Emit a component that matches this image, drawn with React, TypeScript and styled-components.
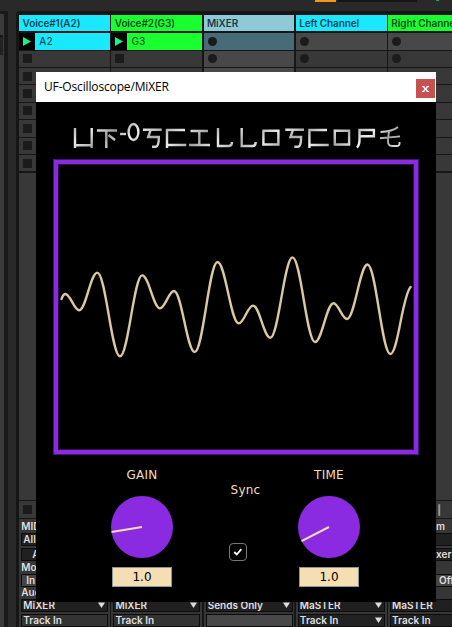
import React from "react";
import styled, { createGlobalStyle } from "styled-components";

const GlobalStyle = createGlobalStyle`
  * { box-sizing: border-box; }
  html, body { margin: 0; background: #292929; overflow: hidden; }
`;

const ui = `"Inter", "Roboto", sans-serif`;
const label = `"DejaVu Sans", Verdana, sans-serif`;

const Screen = styled.div`
  position: relative;
  width: 452px;
  height: 627px;
  overflow: hidden;
  background: #292929;
  font-family: ${ui};
`;

const TopBar = styled.div`
  display: flex;
  height: 11px;
  padding-left: 315px;
  align-items: flex-start;
`;

const TopMark = styled.div<{ $w: number; $gap: number; $color: string; $h?: number }>`
  width: ${(p) => p.$w}px;
  height: ${(p) => p.$h ?? 2}px;
  margin-right: ${(p) => p.$gap}px;
  background: ${(p) => p.$color};
  flex: none;
`;

const Workspace = styled.div`
  display: flex;
  height: 616px;
`;

const Browser = styled.div`
  flex: none;
  width: 8px;
  margin-right: 8px;
  padding-top: 4px;
  background: #3a3a3a;
  border-top: 3px solid #191919;
  border-right: 4px solid #191919;
  border-top-right-radius: 3px;
`;

const BrowserSlot = styled.div`
  height: 20px;
  width: 3px;
  margin-top: 17px;
  border-top: 2px solid #171717;
  background: #222;
`;

const Session = styled.div`
  flex: none;
  display: grid;
  grid-template-columns: repeat(5, 92.2px);
  width: 480px;
  padding: 4px 0 0 3.3px;
  background: #161616;
  border-top-left-radius: 4px;
`;

const TrackColumn = styled.div`
  width: 90.8px;
  height: 612px;
  display: flex;
  flex-direction: column;
`;

const TrackHeader = styled.div<{ $color: string }>`
  flex: none;
  height: 16.4px;
  margin-bottom: 1.8px;
  padding-left: 3.3px;
  background: ${(p) => p.$color};
  color: rgba(0, 20, 30, 0.82);
  font-size: 10px;
  font-weight: 600;
  letter-spacing: -0.1px;
  line-height: 16px;
  white-space: nowrap;
`;

const Slot = styled.div<{ $bg?: string }>`
  flex: none;
  display: flex;
  align-items: center;
  height: 16.4px;
  margin-bottom: 1px;
  padding-left: 4px;
  background: ${(p) => p.$bg ?? "#383838"};
`;

const StopMark = styled.div<{ $round?: boolean }>`
  width: 9px;
  height: 9px;
  background: #1b1b1b;
  border-radius: ${(p) => (p.$round ? "50%" : "0")};
`;

const PlayCell = styled.div`
  display: flex;
  align-items: center;
  width: 16px;
  height: 100%;
  margin-left: -4px;
  padding-left: 4px;
  background: #050505;
`;

const ClipName = styled.div`
  padding-left: 4px;
  color: rgba(0, 25, 25, 0.8);
  font-size: 10px;
  font-weight: 500;
`;

const Filler = styled.div`
  flex: none;
  height: 327px;
  margin: 1px 0;
  background: #383838;
`;

const Routing = styled.div`
  flex: none;
  height: 111px;
  display: flex;
  flex-direction: column;
  padding: 0 2px;
  background: #363636;
  color: #dedede;
  font-size: 10px;
  font-weight: 600;
  white-space: nowrap;
`;

const Caption = styled.div<{ $right?: boolean; $h?: number }>`
  flex: none;
  height: ${(p) => p.$h ?? 13}px;
  line-height: ${(p) => p.$h ?? 13}px;
  padding-left: ${(p) => (p.$right ? "46px" : "0")};
`;

const Chooser = styled.div<{ $bg?: string; $gap?: number; $indent?: number }>`
  flex: none;
  display: flex;
  align-items: center;
  justify-content: space-between;
  height: 13px;
  width: 87px;
  line-height: 11px;
  margin-bottom: ${(p) => p.$gap ?? 2}px;
  padding: 0 2px 0 ${(p) => p.$indent ?? 1}px;
  border: 1px solid #0c0c0c;
  background: ${(p) => p.$bg ?? "#202020"};
`;

const PluginWindow = styled.section`
  position: absolute;
  left: 36px;
  top: 72px;
  width: 400px;
  height: 530px;
  background: #000;
  display: flex;
  flex-direction: column;
`;

const TitleBar = styled.header`
  flex: none;
  height: 30px;
  display: flex;
  align-items: center;
  justify-content: space-between;
  padding: 0 1px 0 8px;
  background: #fff;
  color: #000;
  font: 12px/30px "Open Sans", "Noto Sans", sans-serif;
  letter-spacing: -0.15px;
`;

const CloseButton = styled.button`
  display: grid;
  place-items: center;
  width: 19px;
  height: 19px;
  margin-top: 3px;
  padding: 0;
  border: 0;
  background: #c75050;
`;

const Logo = styled.svg`
  flex: none;
  display: block;
  width: 400px;
  height: 57px;
`;

const Scope = styled.div`
  flex: none;
  width: 366px;
  height: 296px;
  margin-left: 17px;
  border: 1px solid #46157a;
  background: #000;
`;

const ScopeFrame = styled.div`
  height: 294px;
  border: 4px solid #8a2be2;
  box-shadow: inset 0 0 0 1px #32104f;
`;

const Controls = styled.div`
  display: grid;
  grid-template-columns: 62px 125px 62px;
  margin: 12px 0 0 75px;
  color: #f5deb3;
  font-family: ${label};
  font-size: 12px;
`;

const KnobGroup = styled.div`
  display: flex;
  flex-direction: column;
  align-items: center;
`;

const ControlLabel = styled.div`
  height: 17px;
  line-height: 17px;
  letter-spacing: 0.25px;
`;

const Dial = styled.svg`
  display: block;
  width: 62px;
  height: 62px;
  margin: 12px 0 9px;
`;

const ValueBox = styled.div`
  width: 60px;
  height: 20px;
  border: 1px solid #8e969b;
  background: #f5deb3;
  color: #000;
  text-align: center;
  line-height: 19px;
`;

const SyncGroup = styled.div`
  display: flex;
  flex-direction: column;
  align-items: center;
  padding: 15px 0 0 20px;
`;

const CheckBox = styled.div`
  display: grid;
  place-items: center;
  width: 18px;
  height: 18px;
  margin: 44px 15px 0 0;
  border: 1px solid #777;
  border-radius: 4px;
`;

const wavePoints: [number, number][] = [
  [65.3, 294], [79.2, 310.3], [97.3, 272.6], [120, 356.3], [142.2, 275.4],
  [160, 308.3], [174, 291], [194.7, 352], [217.5, 262], [238.7, 323.4],
  [253, 305.6], [270.3, 337.8], [292.5, 257.4], [315, 342], [333.5, 303.2],
  [347, 319], [367.5, 264.5], [390.3, 354],
];

function wavePath() {
  let d = "M61.5 299 Q63 294.3 65.3 294";
  for (let i = 1; i < wavePoints.length; i++) {
    const [x0, y0] = wavePoints[i - 1];
    const [x1, y1] = wavePoints[i];
    const k = (x1 - x0) * 0.37;
    d += ` C${x0 + k} ${y0} ${x1 - k} ${y1} ${x1} ${y1}`;
  }
  return d + " C398 354 402 297 410.5 287";
}

const Arrow = () => (
  <svg width="7" height="6" viewBox="0 0 7 6"><path d="M0 .5h7L3.5 6z" fill="#ddd" /></svg>
);

const esGlyph = "M143 129.7h18.7M150.5 130.3l-2.3 6.7h10.6c0 4-.4 9.5-3 9.8h-3.8";

function ScopeLogo() {
  return (
    <Logo viewBox="36 102 400 57">
      <defs>
        <linearGradient id="steel" gradientUnits="userSpaceOnUse" x1="74" y1="125" x2="92" y2="148" spreadMethod="reflect">
          <stop offset="0" stopColor="#aaa" />
          <stop offset=".5" stopColor="#eee" />
          <stop offset="1" stopColor="#a0a0a0" />
        </linearGradient>
      </defs>
      <g fill="none" stroke="url(#steel)" strokeWidth="2.4">
        <path d="M75 128v20M91.7 128v20M75 145.3h16.7" />
        <path d="M97 130.5h20M106.3 131v17M108.5 135l6.5 5" />
        <path d="M120 134h6" />
        <ellipse cx="133.5" cy="132" rx="4.9" ry="8" />
        <path d={esGlyph} />
        <path d="M185 130h-18v18M167 145h19.3" />
        <path d="M190.5 131h17.5M199.3 131v14M189 145h21" />
        <path d="M218 128v18h11q3 0 3-4" />
        <path d="M241.7 128v18h11q3 0 3-4" />
        <path d="M263.4 130.7h15v13.8h-15z" />
        <path transform="translate(142.3 0)" d={esGlyph} />
        <path d="M327 130h-17.6v18M309.4 145h19.3" />
        <path d="M334.8 130.7h14.3v13.8h-14.3z" />
        <path d="M359.5 136.3h14.4V130h-14.4v10q0 5-2.5 7.7" />
        <path strokeWidth="1.9" d="M380.5 132q12-.5 17.5-5M380 138.2l20-1.8M389 131l-1 9q-.5 6 4 6h5q3 0 2.5-4" />
      </g>
    </Logo>
  );
}

function Knob({ name, x, y }: { name: string; x: number; y: number }) {
  return (
    <KnobGroup>
      <ControlLabel>{name}</ControlLabel>
      <Dial viewBox="0 0 62 62">
        <circle cx="31" cy="31" r="31" fill="#8a2be2" />
        <path d={`M31 31L${x} ${y}`} stroke="#f5deb3" strokeWidth="2" />
      </Dial>
      <ValueBox>1.0</ValueBox>
    </KnobGroup>
  );
}

interface Track {
  name: string;
  color: string;
  clip?: string;
  output: string;
  channel: string;
  channelArrow?: boolean;
}

const tracks: Track[] = [
  { name: "Voice#1(A2)", color: "#19e8ff", clip: "A2", output: "MiXER", channel: "Track In" },
  { name: "Voice#2(G3)", color: "#1aff2f", clip: "G3", output: "MiXER", channel: "Track In" },
  { name: "MiXER", color: "#8dc9d7", output: "Sends Only", channel: "" },
  { name: "Left Channel", color: "#19e8ff", output: "MaSTER", channel: "Track In", channelArrow: true },
  { name: "Right Channel", color: "#1aff2f", output: "MaSTER", channel: "Track In", channelArrow: true },
];

function TrackView({ track, index }: { track: Track; index: number }) {
  const first = index === 0;
  const mixer = index === 2;
  const last = index === 4;
  return (
    <TrackColumn>
      <TrackHeader $color={track.color}>{track.name}</TrackHeader>
      {track.clip ? (
        <Slot $bg={track.color}>
          <PlayCell>
            <svg width="8" height="9" viewBox="0 0 8 9"><path d="M0 0l8 4.5L0 9z" fill="#14f58c" /></svg>
          </PlayCell>
          <ClipName>{track.clip}</ClipName>
        </Slot>
      ) : (
        <Slot $bg={mixer ? "#476b77" : "#484848"}><StopMark $round /></Slot>
      )}
      {[0, 1, 2, 3, 4, 5, 6].map((n) => (
        <Slot key={n} $bg={mixer ? "#484848" : undefined}>
          {(!last || n === 0) && <StopMark $round={!track.clip} />}
        </Slot>
      ))}
      <Filler />
      <Slot>
        {last ? (
          <svg width="90" height="12" viewBox="0 0 90 12"><path d="M49 0v12" stroke="#999" strokeWidth="2" /></svg>
        ) : <StopMark />}
      </Slot>
      <Routing>
        <Caption $right={last} $h={14}>{last ? "m" : first && "MIDI"}</Caption>
        <Chooser>{first && "All"}</Chooser>
        <Chooser $indent={last ? 45 : 10} $gap={0}>{last ? "xer" : first && "A"}</Chooser>
        <Caption>{first && "Mo"}</Caption>
        <Chooser $bg="#454545" $gap={-1} $indent={last ? 48 : 4}>{last ? "Off" : first && "In"}</Chooser>
        <Caption>{first && "Aud"}</Caption>
        <Chooser>{track.output}<Arrow /></Chooser>
        <Chooser $bg={mixer ? "#484848" : track.channelArrow ? "#222" : "#333"}>
          {track.channel}{track.channelArrow && <Arrow />}
        </Chooser>
      </Routing>
    </TrackColumn>
  );
}

export default function App() {
  return (
    <Screen>
      <GlobalStyle />
      <TopBar>
        <TopMark $w={21} $gap={2} $color="#f7981d" />
        <TopMark $w={79} $gap={19} $color="#151515" />
        <TopMark $w={3} $gap={0} $h={1} $color="#16a660" />
      </TopBar>
      <Workspace>
        <Browser><BrowserSlot /></Browser>
        <Session>
          {tracks.map((t, i) => <TrackView key={t.name} track={t} index={i} />)}
        </Session>
      </Workspace>
      <PluginWindow>
        <TitleBar>
          <span>UF-Oscilloscope/MiXER</span>
          <CloseButton aria-label="Close">
            <svg width="7" height="6" viewBox="0 0 7 6"><path d="M1.2.5l4.6 5M5.8.5l-4.6 5M0 .5h2.5M4.5 .5h2.5M0 5.5h2.5M4.5 5.5h2.5" stroke="#fff" strokeWidth="1.2" /></svg>
          </CloseButton>
        </TitleBar>
        <ScopeLogo />
        <Scope>
          <ScopeFrame>
            <svg width="356" height="286" viewBox="58 164 356 286">
              <path d={wavePath()} fill="none" stroke="#dcc8a0" strokeWidth="2.4" strokeLinecap="round" />
            </svg>
          </ScopeFrame>
        </Scope>
        <Controls>
          <Knob name="GAIN" x={0.5} y={36} />
          <SyncGroup>
            <ControlLabel>Sync</ControlLabel>
            <CheckBox>
              <svg width="10" height="8" viewBox="0 0 10 8"><path d="M1.3 4l2.5 2.5L8.3 1.2" fill="none" stroke="#fff" strokeWidth="1.8" /></svg>
            </CheckBox>
          </SyncGroup>
          <Knob name="TIME" x={3.5} y={45.2} />
        </Controls>
      </PluginWindow>
    </Screen>
  );
}
